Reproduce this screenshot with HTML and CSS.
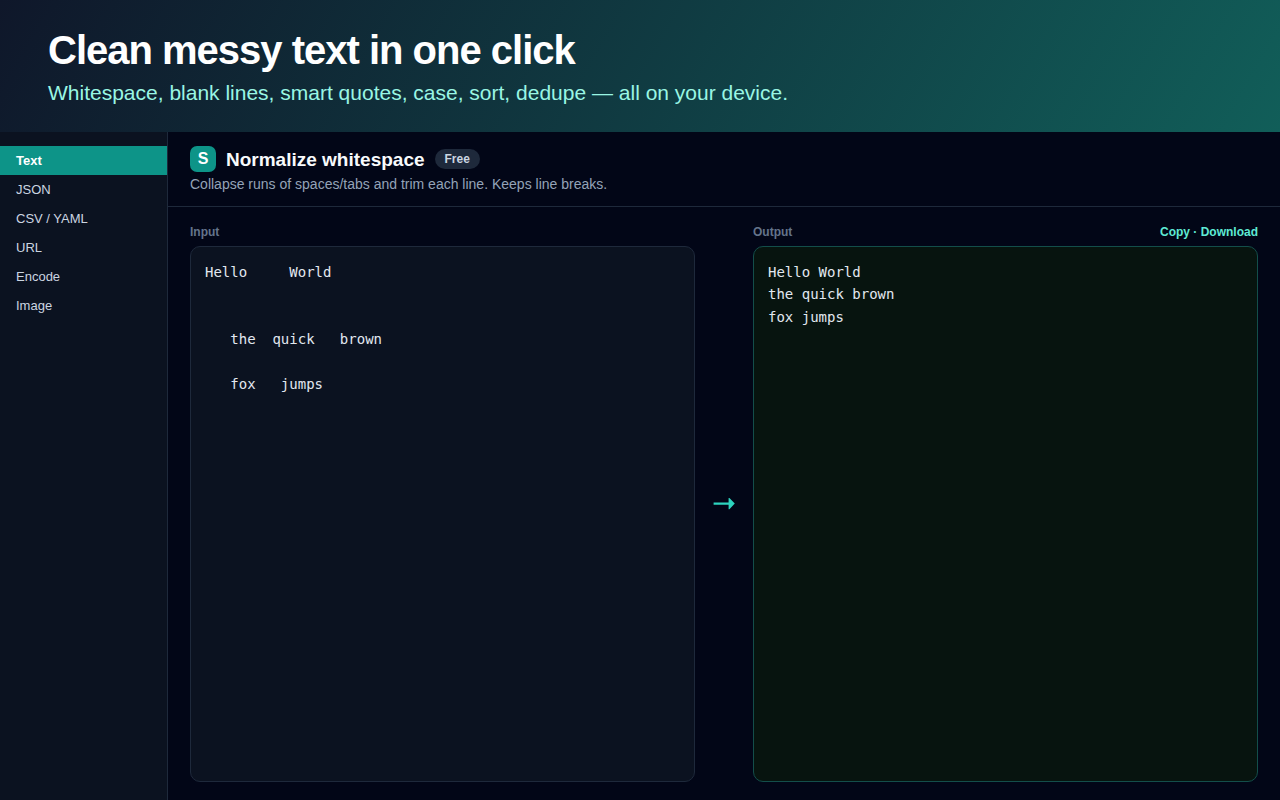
FILE: index.html
```html
<!DOCTYPE html>
<html lang="en">
<head>
<meta charset="utf-8">
<title>Clean messy text in one click</title>
<link rel="stylesheet" href="styles.css">
</head>
<body>
<header class="hero">
  <h1 class="hero-title">Clean messy text in one click</h1>
  <p class="hero-sub">Whitespace, blank lines, smart quotes, case, sort, dedupe — all on your device.</p>
</header>
<div class="app">
  <nav class="sidebar">
    <a class="nav-item active">Text</a>
    <a class="nav-item">JSON</a>
    <a class="nav-item">CSV / YAML</a>
    <a class="nav-item">URL</a>
    <a class="nav-item">Encode</a>
    <a class="nav-item">Image</a>
  </nav>
  <main class="main">
    <div class="tool-head">
      <div class="tool-row">
        <span class="logo">S</span>
        <h2 class="tool-name">Normalize whitespace</h2>
        <span class="badge">Free</span>
      </div>
      <p class="tool-desc">Collapse runs of spaces/tabs and trim each line. Keeps line breaks.</p>
    </div>
    <div class="panes">
      <section class="pane">
        <div class="pane-head"><span>Input</span></div>
        <pre class="box">Hello     World


   the  quick   brown

   fox   jumps</pre>
      </section>
      <div class="arrow"><svg width="22" height="14" viewBox="0 0 22 14"><path d="M.6 5.500h15V1h.8L21.800 6.600l-5.400 5.700h-.8V7.700H.6z" fill="#2dd4bf"/></svg></div>
      <section class="pane">
        <div class="pane-head"><span>Output</span><span class="actions">Copy · Download</span></div>
        <pre class="box output">Hello World
the quick brown
fox jumps</pre>
      </section>
    </div>
  </main>
</div>
</body>
</html>
```
FILE: styles.css
```css
* { box-sizing: border-box; }
body {
  margin: 0;
  width: 1280px;
  height: 800px;
  display: flex;
  flex-direction: column;
  overflow: hidden;
  background: #020617;
  color: #e2e8f0;
  font-family: "Liberation Sans", Arial, sans-serif;
}
.hero {
  height: 132px;
  flex: none;
  padding: 26px 48px 0;
  background: linear-gradient(120deg, #0f172a, #115e59);
}
.hero-title {
  margin: 0;
  font-size: 40px;
  line-height: 48px;
  font-weight: 700;
  letter-spacing: -1px;
  color: #fff;
}
.hero-sub { margin: 6px 0 0; font-size: 21px; line-height: 25px; color: #99f6e4; white-space: nowrap; }
.app { flex: 1; display: flex; min-height: 0; }
.sidebar {
  width: 168px;
  flex: none;
  padding-top: 14px;
  background: #0b1220;
  border-right: 1px solid #1e293b;
}
.nav-item { display: block; height: 29px; padding: 0 16px; font-size: 13px; line-height: 29px; color: #cbd5e1; }
.nav-item.active { background: #0d9488; color: #fff; font-weight: 700; }
.main { flex: 1; display: flex; flex-direction: column; min-width: 0; }
.tool-head { height: 75px; flex: none; padding: 14px 22px 0; border-bottom: 1px solid #1e293b; }
.tool-row { display: flex; align-items: center; gap: 10px; height: 26px; }
.logo {
  width: 26px;
  height: 26px;
  border-radius: 7px;
  background: #0d9488;
  color: #fff;
  font-size: 16px;
  font-weight: 700;
  line-height: 26px;
  text-align: center;
}
.tool-name { margin: 0; padding-top: 2px; font-size: 19px; line-height: 22px; color: #f8fafc; }
.badge {
  height: 20px;
  padding: 0 10px;
  border-radius: 10px;
  background: #1e293b;
  color: #cbd5e1;
  font-size: 12px;
  font-weight: 700;
  line-height: 20px;
}
.tool-desc { margin: 4px 0 0; font-size: 14px; line-height: 16px; color: #94a3b8; }
.panes { flex: 1; display: flex; padding: 18px 22px; }
.pane { flex: 1; display: flex; flex-direction: column; }
.pane-head {
  display: flex;
  justify-content: space-between;
  height: 14px;
  margin-bottom: 7px;
  font-size: 12px;
  font-weight: 700;
  line-height: 14px;
  color: #64748b;
}
.actions { color: #5eead4; }
.box {
  flex: 1;
  margin: 0;
  padding: 14px;
  border: 1px solid #1e293b;
  border-radius: 10px;
  background: #0b1220;
  font-family: "DejaVu Sans Mono", monospace;
  font-size: 14px;
  line-height: 22.4px;
}
.box.output { background: #07140f; border-color: #134e4a; }
.arrow { width: 58px; display: flex; align-items: center; justify-content: center; }
```
